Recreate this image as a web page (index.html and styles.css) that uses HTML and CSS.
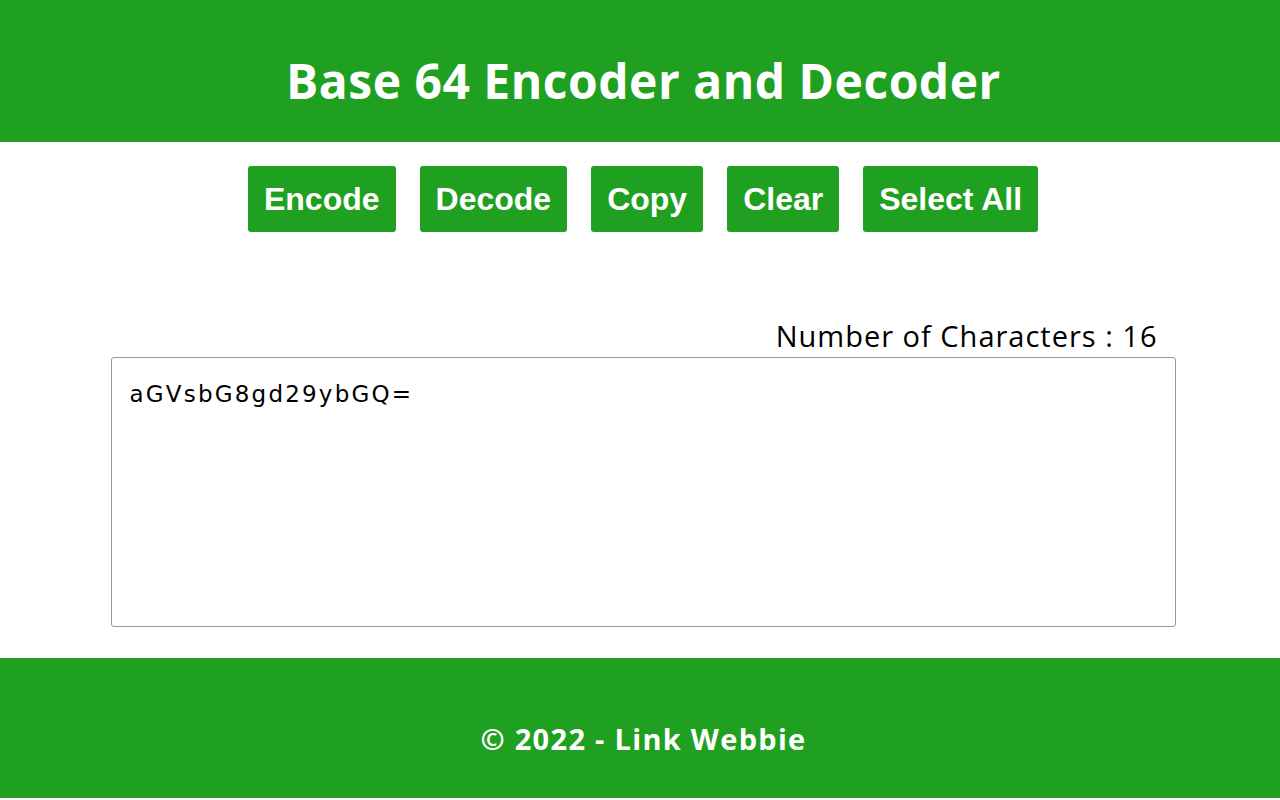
FILE: index.html
```html
<!DOCTYPE html>
<html lang="en">
<head>
<meta charset="utf-8">
<title>Base 64 Encoder and Decoder</title>
<link rel="stylesheet" href="styles.css">
</head>
<body>
<header class="site-header">
  <h1 class="title">Base 64 Encoder and Decoder</h1>
</header>
<main class="main">
  <div class="toolbar">
    <button class="btn" type="button">Encode</button>
    <button class="btn" type="button">Decode</button>
    <button class="btn" type="button">Copy</button>
    <button class="btn" type="button">Clear</button>
    <button class="btn" type="button">Select All</button>
  </div>
  <div class="editor">
    <div class="counter">Number of Characters : 16</div>
    <textarea class="input" spellcheck="false">aGVsbG8gd29ybGQ=</textarea>
  </div>
</main>
<footer class="site-footer">
  <p class="copy">© 2022 - Link Webbie</p>
</footer>
</body>
</html>
```
FILE: styles.css
```css
* { box-sizing: border-box; }
html, body { margin: 0; padding: 0; background: #fff; }
body {
  font-family: "Open Sans", "DejaVu Sans", sans-serif;
  color: #000;
  height: 800px;
  overflow: hidden;
}
.site-header {
  background: #20a020;
  height: 142px;
  display: flex;
  align-items: center;
  justify-content: center;
  padding-left: 7px;
  padding-top: 19px;
}
.title {
  margin: 0;
  color: #fff;
  font-size: 48px;
  font-weight: 700;
  letter-spacing: 0.5px;
  line-height: 1;
}
.main {
  padding-left: 6px;
}
.toolbar {
  display: flex;
  justify-content: center;
  gap: 24px;
  padding-top: 24px;
}
.btn {
  background: #20a020;
  color: #fff;
  border: none;
  border-radius: 3px;
  height: 66px;
  padding: 0 16px;
  font-family: "Liberation Sans", Arial, sans-serif;
  font-weight: 700;
  font-size: 32px;
  cursor: pointer;
}
.editor {
  width: 1065px;
  margin: 0 auto;
  padding-top: 84px;
}
.counter {
  text-align: right;
  font-size: 29px;
  letter-spacing: 1px;
  line-height: 40px;
  padding-right: 18px;
  margin-bottom: 1px;
}
.input {
  display: block;
  width: 1065px;
  height: 270px;
  border: 1px solid #999;
  border-radius: 3px;
  padding: 18px 18px 14px;
  font-family: "DejaVu Sans", Verdana, sans-serif;
  font-size: 23px;
  letter-spacing: 2.2px;
  line-height: 36px;
  resize: none;
  color: #000;
  outline: none;
}
.site-footer {
  background: #20a020;
  height: 140px;
  margin-top: 31px;
  display: flex;
  align-items: center;
  justify-content: center;
  padding-left: 7px;
  padding-top: 20px;
}
.copy {
  margin: 0;
  color: #fff;
  font-size: 29px;
  letter-spacing: 1.3px;
  font-weight: 700;
}
```
